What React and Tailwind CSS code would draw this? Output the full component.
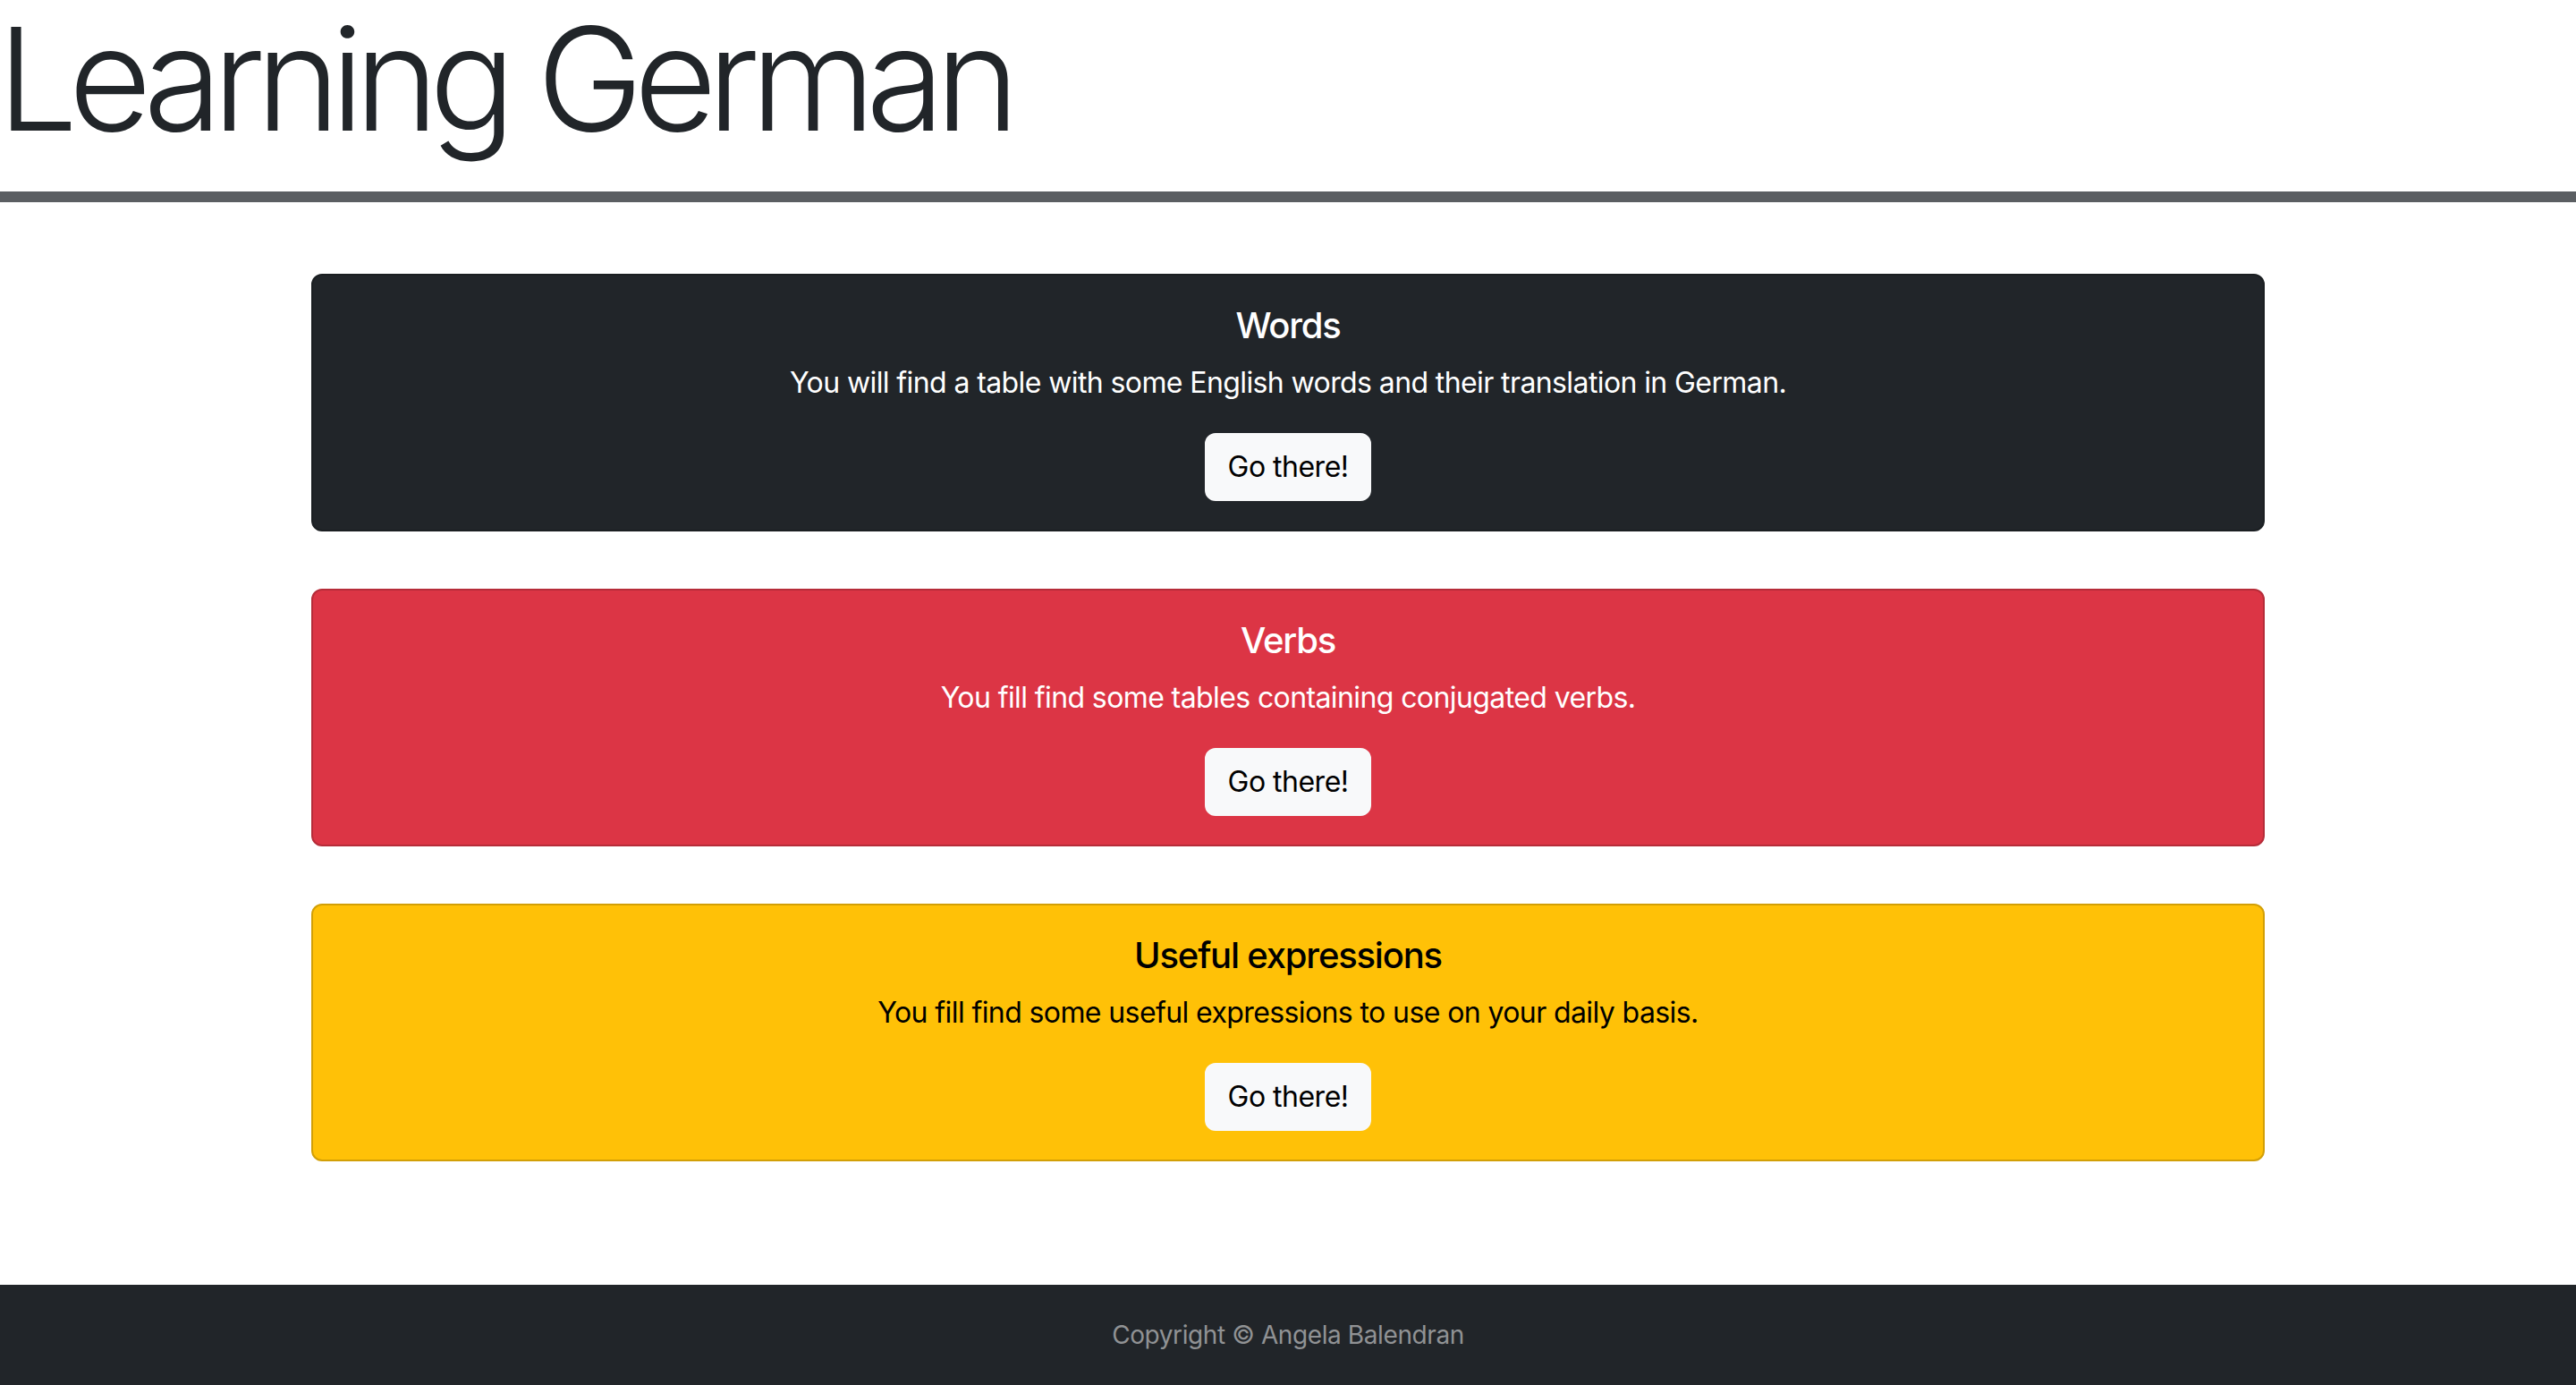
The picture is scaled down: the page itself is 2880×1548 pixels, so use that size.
import React from "react";

const cards = [
  {
    title: "Words",
    text: "You will find a table with some English words and their translation in German.",
    className: "bg-[#212529] border-[#1b1f22] text-white",
  },
  {
    title: "Verbs",
    text: "You fill find some tables containing conjugated verbs.",
    className: "bg-[#dc3545] border-[#b62c39] text-white",
  },
  {
    title: "Useful expressions",
    text: "You fill find some useful expressions to use on your daily basis.",
    className: "bg-[#ffc107] border-[#d29f06] text-black",
  },
];

const Card = ({ title, text, className }) => (
  <div className={`border-2 rounded-[12px] p-[32px] text-center ${className}`}>
    <h5 className="text-[40px] leading-[48px] font-medium tracking-[-1.2px] mb-[16px]">{title}</h5>
    <p className="text-[32px] leading-[48px] tracking-[-0.6px] mb-[32px]">{text}</p>
    <button className="bg-[#f8f9fa] border-2 border-[#f8f9fa] text-black text-[32px] leading-[48px] tracking-[-0.5px] px-[24px] py-[12px] rounded-[12px]">
      Go there!
    </button>
  </div>
);

export default function App() {
  return (
    <div className="bg-white text-[#212529] font-['Inter','Liberation_Sans',sans-serif]">
      <header>
        <h1 className="text-[160px] leading-[176px] font-light tracking-[-10.6px] -ml-[3px]">Learning German</h1>
        <hr className="mt-[38px] h-[12px] border-0 bg-[#5b5e62]" />
      </header>

      <main className="pt-[80px] pb-[138px]">
        <div className="w-[2184px] mx-auto flex flex-col gap-[64px]">
          {cards.map((card) => (
            <Card key={card.title} {...card} />
          ))}
        </div>
      </main>

      <footer className="bg-[#212529] py-[32px] text-center">
        <p className="text-[28px] leading-[48px] tracking-[-0.4px] text-[#909294]">Copyright © Angela Balendran</p>
      </footer>
    </div>
  );
}
